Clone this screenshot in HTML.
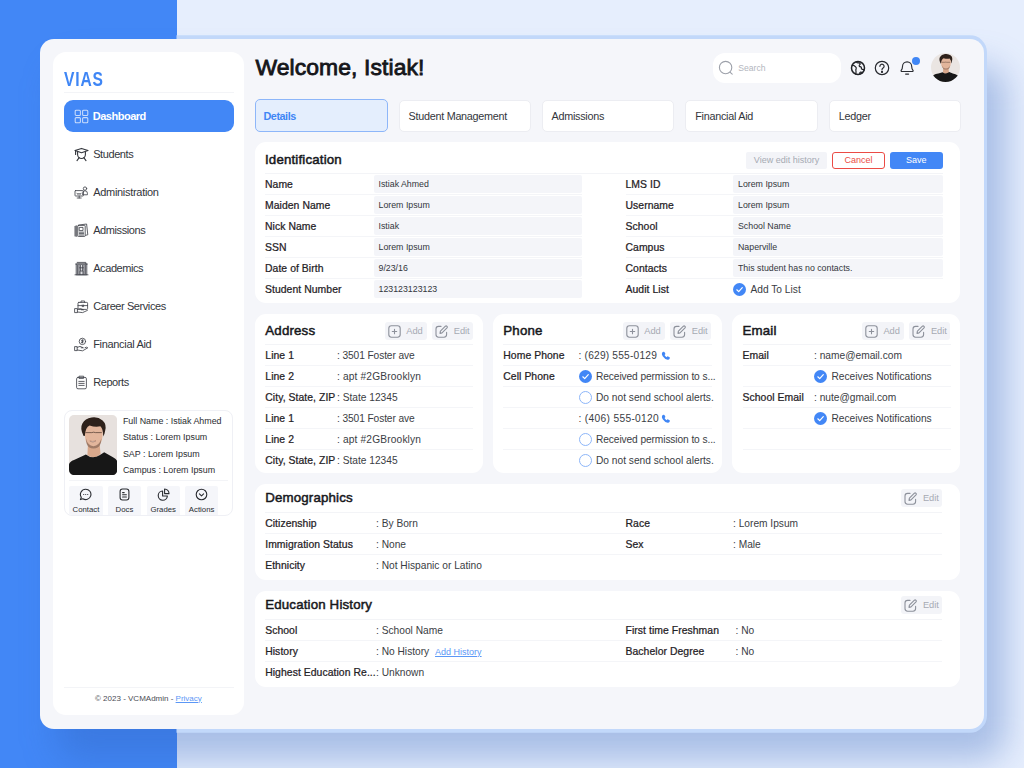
<!DOCTYPE html>
<html lang="en">
<head>
<meta charset="utf-8">
<title>VIAS Dashboard</title>
<style>
*{box-sizing:border-box;margin:0;padding:0}
html,body{width:1024px;height:768px;overflow:hidden}
body{position:relative;background:#E6EEFD;font-family:"Liberation Sans",Arial,sans-serif;color:#1d1f24;font-size:10.5px}
.abs{position:absolute}
#strip{left:0;top:0;width:176.5px;height:768px;background:#4287F6}
#shadow{left:56px;top:66px;width:950px;height:694px;border-radius:24px;background:rgba(47,98,188,.34);filter:blur(17px)}
#ring{left:36.5px;top:35.3px;width:950.5px;height:697.5px;border-radius:17.5px;background:#C2D8FA;clip-path:inset(0 0 0 140px)}
#card{left:40px;top:39px;width:943.5px;height:690px;border-radius:14px;background:#F5F6FA}
#side{left:52.5px;top:52px;width:191.5px;height:663px;border-radius:13px;background:#fff}
.logo{left:63.8px;top:69.6px;font-size:19.3px;font-weight:bold;color:#3F86F5;letter-spacing:1px;line-height:20px;transform:scaleX(.81);transform-origin:0 0}
.hr{height:1px;background:#F3F4F7}
.nav{left:64px;width:170px;height:32.5px;border-radius:9px;font-size:11px;color:#33363c;line-height:32.5px}
.nav svg{position:absolute;left:9.5px;top:9px;width:15px;height:15px;fill:none;stroke:#42454c;stroke-width:.85;stroke-linecap:round;stroke-linejoin:round}
.nav span{position:absolute;left:29.2px;top:0;white-space:nowrap;letter-spacing:-.42px}
.nav.on{background:#4287F6;color:#fff;font-weight:bold}
.nav.on span{letter-spacing:-.5px;left:28.8px}
.nav.on svg{stroke:#C9DCFC;stroke-width:1.05}
h1{left:255.4px;top:53.2px;font-size:22.9px;line-height:28px;font-weight:normal;letter-spacing:.1px;color:#15161a;white-space:nowrap;-webkit-text-stroke:.85px #15161a}
.tab{top:100px;width:132.3px;height:31.6px;border-radius:5px;background:#fff;border:1px solid #ECEDF2;font-size:10.8px;line-height:30px;padding-left:9px;color:#33363c;white-space:nowrap;letter-spacing:-.27px}
.tab.on{top:99.4px;width:133.2px;height:32.7px;line-height:32.2px;background:#E4EEFD;border-color:#8DB6F9;color:#3F86F5;font-weight:bold;padding-left:8px;letter-spacing:-.45px}
.panel{background:#fff;border-radius:11px}
.ttl{font-size:13.3px;font-weight:normal;color:#17181c;white-space:nowrap;letter-spacing:.16px;-webkit-text-stroke:.5px #17181c}
.lbl{font-weight:normal;font-size:10.4px;color:#1f2125;white-space:nowrap;letter-spacing:.06px;-webkit-text-stroke:.24px #1f2125}
.val{font-size:10.2px;color:#3a3d44;white-space:nowrap}
.row{position:absolute;height:21px;line-height:21px;border-bottom:1px solid #F4F5F8}
.inp{position:absolute;height:17.5px;background:#F4F5F9;border-radius:1px;font-size:8.8px;line-height:19.5px;color:#33363c;padding-left:5px;border-radius:2px;white-space:nowrap}
.btn{position:absolute;height:18px;border-radius:3px;background:#F3F4F8;color:#A6AAB3;font-size:9.3px;line-height:18px;white-space:nowrap}
.btn svg{position:absolute;top:2.5px;width:13px;height:13px;fill:none;stroke:#8d919b;stroke-width:1.1;stroke-linecap:round;stroke-linejoin:round}
.ck{position:absolute;width:13px;height:13px;border-radius:50%;background:#4287F6}
.ck svg{position:absolute;left:0;top:0;width:13px;height:13px;fill:none;stroke:#fff;stroke-width:1.2;stroke-linecap:round;stroke-linejoin:round}
.uc{position:absolute;width:13px;height:13px;border-radius:50%;background:#fff;border:1.1px solid #8DB6F9}
.pt{font-size:8.9px;line-height:11px;color:#2a2c31;white-space:nowrap}
.pi{width:13px;height:13px;fill:none;stroke:#2a2c31;stroke-width:1.1;stroke-linecap:round;stroke-linejoin:round}
.pb{top:505px;width:33.3px;text-align:center;font-size:7.8px;line-height:10px;color:#2a2c31;white-space:nowrap}
</style>
</head>
<body>
<div id="strip" class="abs"></div>
<div id="shadow" class="abs"></div>
<div id="ring" class="abs"></div>
<div id="card" class="abs"></div>
<div id="side" class="abs"></div>

<!-- SIDEBAR -->
<div class="abs logo">VIAS</div>
<div class="abs hr" style="left:64px;top:92px;width:170px"></div>
<div class="abs nav on" style="top:99.5px"><svg viewBox="0 0 15 15"><rect x="1.2" y="1.2" width="5.2" height="5.2" rx="1"/><rect x="8.6" y="1.2" width="5.2" height="5.2" rx="1"/><rect x="1.2" y="8.6" width="5.2" height="5.2" rx="1"/><rect x="8.6" y="8.6" width="5.2" height="5.2" rx="1"/></svg><span>Dashboard</span></div>
<div class="abs nav" style="top:137.5px"><svg viewBox="0 0 15 15" style="stroke-width:1.1;stroke:#33363c"><path d="M1 3.6 L7.5 1.4 L14 3.6 L7.5 5.8 Z"/><path d="M3.6 4.8 V7.6 a3.9 3.9 0 0 0 7.8 0 V4.8"/><path d="M5.2 10.6 L3 13.6 M9.8 10.6 L12 13.6"/><path d="M1.6 4 V7.4"/></svg><span>Students</span></div>
<div class="abs nav" style="top:175.5px"><svg viewBox="0 0 15 15"><rect x="1" y="5.6" width="8.4" height="5.4" rx=".6"/><path d="M3.2 13 H7.2 M5.2 11 V13"/><circle cx="11" cy="3.6" r="1.7"/><path d="M8.6 9.4 V8.2 a2.4 2.4 0 0 1 4.8 0 V9.4 Z"/><path d="M3 8.2 l1 1.4 l1-1.4 l1 1.4 l1-1.4"/></svg><span style="letter-spacing:-.3px">Administration</span></div>
<div class="abs nav" style="top:213.5px"><svg viewBox="0 0 15 15"><path d="M5 2 L12.6 1 L13.8 11.8 L6 13.4"/><rect x="3.8" y="2.4" width="7.4" height="11" rx=".6" fill="#fff"/><path d="M1 3.4 V13 M1.9 3 V13.2 M2.8 2.8 V13.4"/><rect x="5.6" y="4.4" width="3.4" height="3.2"/><path d="M5.4 9.2 H9.6 M5.4 10.6 H9.6 M5.4 12 H9.6"/></svg><span>Admissions</span></div>
<div class="abs nav" style="top:251.5px"><svg viewBox="0 0 15 15"><path d="M2.2 13.4 V3 H12.8 V13.4 Z" fill="#dcdde1"/><path d="M1 13.8 H14 M1.6 3 H13.4 M3.2 1.4 H11.8 V3"/><path d="M3.6 4.4 V12.8 M5 4.4 V12.8 M6.4 4.4 V9.6 M8.6 4.4 V9.6 M10 4.4 V12.8 M11.4 4.4 V12.8"/><path d="M6 13.6 V10 H9 V13.6 M5.6 6.8 H9.4"/></svg><span>Academics</span></div>
<div class="abs nav" style="top:289.5px"><svg viewBox="0 0 15 15"><rect x="4" y="3.4" width="9.6" height="7" rx=".8"/><path d="M7 3.4 V2 H10.6 V3.4"/><path d="M4 6.6 H13.6 M8.2 6 V7.6 H9.6 V6"/><path d="M1 9.6 H3.4 V13.6 H1 Z M3.4 10.4 L6.4 9.6 L9.6 10.8 H7.4 M3.4 13 L8.6 13.6 L13.4 11.4"/></svg><span>Career Services</span></div>
<div class="abs nav" style="top:327.5px"><svg viewBox="0 0 15 15"><circle cx="8.4" cy="4.4" r="3.2"/><path d="M8.4 2.8 V6 M7.4 5.4 H8.9 a.6 .6 0 0 0 0-1.1 H7.9 a.6 .6 0 0 1 0-1.1 H9.4"/><path d="M1 9.6 H3.2 V13.6 H1 Z M3.2 10.4 L6 9.4 L9.4 10.8 H7.2 M3.2 13 L8.6 13.8 L13.8 10.8 Q12.6 9.6 11 10.6"/></svg><span style="letter-spacing:-.32px">Financial Aid</span></div>
<div class="abs nav" style="top:365.5px"><svg viewBox="0 0 15 15"><rect x="2.6" y="2.4" width="9.8" height="11.4" rx="1.4"/><path d="M5.4 1.2 H9.6 V3.4 H5.4 Z"/><path d="M4.8 6.4 H10.2 M4.8 8.4 H10.2 M4.8 10.4 H10.2"/></svg><span>Reports</span></div>
<div class="abs" style="left:64px;top:409.8px;width:168.7px;height:106.4px;border:1px solid #EFF0F5;border-radius:8px;overflow:hidden">
<div class="abs" style="left:4.3px;top:75.2px;width:33.3px;height:32px;background:#F5F6FA;border-radius:2px"></div>
<div class="abs" style="left:42.8px;top:75.2px;width:33.3px;height:32px;background:#F5F6FA;border-radius:2px"></div>
<div class="abs" style="left:81.6px;top:75.2px;width:33.3px;height:32px;background:#F5F6FA;border-radius:2px"></div>
<div class="abs" style="left:120px;top:75.2px;width:33.3px;height:32px;background:#F5F6FA;border-radius:2px"></div>
</div>
<svg class="abs" style="left:69.2px;top:414.6px;width:48.2px;height:60.1px" viewBox="0 0 48.2 60.1"><defs><clipPath id="ph"><rect width="48.2" height="60.1" rx="5"/></clipPath></defs><g clip-path="url(#ph)"><rect width="48.2" height="60.1" fill="#E7E1DE"/><path d="M19 29 L18.4 40 Q24.5 45.4 31.6 39 L30.6 29 Z" fill="#d9a88b"/><path d="M0 60.1 V49.4 Q.6 46.6 5 45 L16.9 39.5 Q23.4 44.8 31 40 L35.2 37.2 L44 42.2 Q48.2 44.2 48.2 47 V60.1 Z" fill="#171717"/><path d="M15.6 17 Q15 8 24.6 8.6 Q34.2 8.4 33.8 18 Q33.6 26.5 30 30.6 Q27 33.8 24.4 33.6 Q21.6 33.6 18.8 30.2 Q15.8 26 15.6 17 Z" fill="#e3b69c"/><path d="M17 23.4 Q18.6 30.4 24.4 31.2 Q30.2 30.6 32.4 23.4 Q32.2 30 29 32.2 Q24.4 34.8 20 32.2 Q17 29.8 17 23.4 Z" fill="#6a4a3c" opacity=".55"/><path d="M14.6 21 Q10.6 13.6 13.4 8.6 Q16 3.4 22.6 2.5 Q29 1.5 33.6 5.4 Q37.8 9.2 36.2 15.6 Q35.6 19.8 34.2 21.6 Q34.4 14.4 31.4 11.2 Q26.4 12.4 20.6 10.4 Q16.4 12 15.8 21 Z" fill="#2e211b"/><path d="M16.4 17.6 H22.8 M26.4 17.6 H32.8 M22.8 17.6 Q24.6 16.8 26.4 17.6" stroke="#4a362c" stroke-width=".7" fill="none"/><path d="M20.8 26 Q23.8 28.8 27 25.8 Q23.8 27 20.8 26 Z" fill="#f4ece8" stroke="#8b5a49" stroke-width=".4"/></g></svg>
<div class="abs pt" style="left:122.9px;top:415.7px">Full Name : Istiak Ahmed</div>
<div class="abs pt" style="left:122.9px;top:432.4px">Status : Lorem Ipsum</div>
<div class="abs pt" style="left:122.9px;top:448.6px">SAP : Lorem Ipsum</div>
<div class="abs pt" style="left:122.9px;top:464.7px">Campus : Lorem Ipsum</div>
<div class="abs hr" style="left:69px;top:480.3px;width:159px"></div>
<svg class="abs pi" style="left:79.4px;top:487.5px" viewBox="0 0 13 13"><path d="M6.7 1.2 a5.2 5.2 0 1 1 -2.9 9.5 L1.4 11.6 L2.3 9.3 A5.2 5.2 0 0 1 6.7 1.2 Z"/><path d="M4.7 6.5 h.1 M6.7 6.5 h.1 M8.7 6.5 h.1" stroke-width="1"/></svg>
<svg class="abs pi" style="left:118px;top:487.5px" viewBox="0 0 13 13"><rect x="2.1" y="1" width="8.8" height="11" rx="2.4"/><path d="M4.6 9 H8.4 M4.6 6.8 H8.4 M4.6 4.6 H6.2"/></svg>
<svg class="abs pi" style="left:156.6px;top:487.5px" viewBox="0 0 13 13"><path d="M5.6 3 A4.6 4.6 0 1 0 10.4 8 H5.6 Z"/><path d="M7.6 1 A4.4 4.4 0 0 1 12 5.6 H7.6 Z"/></svg>
<svg class="abs pi" style="left:195.2px;top:487.5px" viewBox="0 0 13 13"><circle cx="6.5" cy="6.5" r="5.3"/><path d="M4.4 5.8 L6.5 7.8 L8.6 5.8"/></svg>
<div class="abs pb" style="left:69.3px">Contact</div>
<div class="abs pb" style="left:107.8px">Docs</div>
<div class="abs pb" style="left:146.6px">Grades</div>
<div class="abs pb" style="left:185px">Actions</div>
<div class="abs hr" style="left:64px;top:687px;width:170px"></div>
<div class="abs" style="left:95px;top:692.5px;font-size:8px;line-height:11px;color:#4a4d55;white-space:nowrap">© 2023 - VCMAdmin - <span style="color:#5B97F6;text-decoration:underline">Privacy</span></div>

<!-- HEADER -->
<h1 class="abs">Welcome, Istiak!</h1>
<div class="abs" style="left:712.5px;top:53px;width:128.5px;height:29.5px;border-radius:12px;background:#fff"></div>
<svg class="abs" style="left:718px;top:60px;width:16px;height:16px" viewBox="0 0 16 16" fill="none" stroke="#9DA1AA" stroke-width="1.1" stroke-linecap="round"><circle cx="7.6" cy="7.6" r="6.2"/><path d="M12.2 12.4 L14.2 14.2"/></svg>
<div class="abs" style="left:738.3px;top:63px;font-size:8.6px;line-height:11px;color:#B3B6BE;white-space:nowrap">Search</div>
<svg class="abs" style="left:850px;top:59.7px;width:16px;height:16px" viewBox="0 0 16 16" fill="none" stroke="#202226" stroke-width="1.5" stroke-linecap="round" stroke-linejoin="round"><circle cx="8" cy="8" r="6.5"/><path d="M2.4 5.6 Q4.4 5.2 5.2 6.6 Q6.6 7.4 6.2 8.8 Q5.4 9.8 6 11 Q6.2 12.8 5.6 14" stroke-width="1.2"/><path d="M6.4 2 Q7.4 3.4 9 2.8 Q10.6 3.2 10 4.6 Q8.6 5.6 9.6 6.6 Q11 6.4 11.4 7.6 Q11 9 12.2 9.4 Q13.4 9.2 14.2 9.8" stroke-width="1.2"/><path d="M9.8 14 Q9.4 12.6 10.6 12 Q11.8 12 12.4 12.8" stroke-width="1.2"/></svg>
<svg class="abs" style="left:874px;top:60px;width:16px;height:16px" viewBox="0 0 16 16" fill="none" stroke="#26282d" stroke-width="1.2" stroke-linecap="round" stroke-linejoin="round"><circle cx="8" cy="8" r="6.7"/><path d="M5.9 6.3 a2.1 2.1 0 1 1 3.2 1.8 Q8 8.8 8 9.8"/><circle cx="8" cy="11.9" r=".5" fill="#26282d"/></svg>
<svg class="abs" style="left:899.3px;top:60px;width:16px;height:16px" viewBox="0 0 16 16" fill="none" stroke="#2b2d32" stroke-width="1.15" stroke-linecap="round" stroke-linejoin="round"><path d="M3 11.5 Q1.7 11.5 2.2 10.3 Q3.5 8.8 3.5 6.4 a4.6 4.6 0 0 1 9.2 0 Q12.7 8.8 14 10.3 Q14.5 11.5 13.2 11.5 Z"/><path d="M6.6 14.1 H9.6"/></svg>
<div class="abs" style="left:911.9px;top:57px;width:8.2px;height:8.2px;border-radius:50%;background:#3F86F5"></div>
<svg class="abs" style="left:931.1px;top:53.3px;width:29px;height:29px" viewBox="0 0 29 29"><defs><clipPath id="av"><circle cx="14.5" cy="14.5" r="14.5"/></clipPath></defs><g clip-path="url(#av)"><rect width="29" height="29" fill="#EAE5E2"/><path d="M12.2 14 L12 19.6 Q14.8 22.4 17.9 19.4 L17.6 14 Z" fill="#d8a88c"/><path d="M0 29 V25 Q1.6 21.4 7.4 20.6 L11.6 19.3 Q14.8 21.8 18.2 19.1 L21.8 20.4 Q27.6 21.4 29 25 V29 Z" fill="#171717"/><path d="M10 9.4 Q9.8 4 15 4.2 Q20 4 19.9 9.6 Q19.8 13.4 18 15.2 Q16.4 16.4 14.9 16.3 Q13.4 16.3 11.8 15 Q10.1 13 10 9.4 Z" fill="#e2b59b"/><path d="M10.8 12 Q11.6 15.2 14.9 15.6 Q18.2 15.2 19.2 12 Q19 15 17.4 16 Q14.9 17.2 12.5 16 Q10.9 14.8 10.8 12 Z" fill="#6a4a3c" opacity=".5"/><path d="M9.6 10.4 Q7.6 6.6 9 4 Q10.4 1.4 14 1.1 Q17.6 .6 19.8 2.6 Q22 4.6 21 8 Q20.8 9.8 20.2 10.6 Q20.2 7.2 18.6 5.6 Q15.8 6.2 12.6 5.2 Q10.4 6 10 10.4 Z" fill="#2e211b"/><path d="M10.6 9.3 H13.8 M15.8 9.3 H19.2 M13.8 9.3 Q14.8 8.9 15.8 9.3" stroke="#4a362c" stroke-width=".45" fill="none"/></g></svg>
<div class="abs tab on" style="left:254.5px"><span>Details</span></div>
<div class="abs tab" style="left:398.6px"><span>Student Management</span></div>
<div class="abs tab" style="left:541.6px;width:132.8px"><span>Admissions</span></div>
<div class="abs tab" style="left:685.3px"><span>Financial Aid</span></div>
<div class="abs tab" style="left:828.8px"><span>Ledger</span></div>
<div class="abs panel" style="left:255px;top:142px;width:705px;height:160.5px"></div>
<div class="abs ttl" id="t-id" style="left:265px;top:152px;line-height:16px">Identification</div>
<div class="btn" style="left:746.3px;top:151.5px;width:80.7px;height:17px;line-height:17px;border-radius:2px;font-size:9px;padding-left:7.5px"><span class="bt">View edit history</span></div>
<div class="btn" style="left:832px;top:151.5px;width:53px;height:17px;line-height:15.4px;border-radius:3px;font-size:9px;background:#fff;border:1px solid #EB4B45;color:#EB4B45;text-align:center"><span class="bt">Cancel</span></div>
<div class="btn" style="left:890px;top:151.5px;width:52.5px;height:17px;line-height:17px;border-radius:3px;font-size:9px;background:#4287F6;color:#fff;text-align:center"><span class="bt">Save</span></div>
<div class="abs hr" style="left:265px;top:172.5px;width:677.5px"></div>
<div class="row" style="left:265px;top:173.5px;width:317px"><span class="lbl il">Name</span></div>
<div class="inp" style="left:373.5px;top:175.0px;width:208.5px"><span class="iv">Istiak Ahmed</span></div>
<div class="row" style="left:625.5px;top:173.5px;width:317px"><span class="lbl il">LMS ID</span></div>
<div class="inp" style="left:733px;top:175.0px;width:209.5px"><span class="iv">Lorem Ipsum</span></div>
<div class="row" style="left:265px;top:194.5px;width:317px"><span class="lbl il">Maiden Name</span></div>
<div class="inp" style="left:373.5px;top:196.0px;width:208.5px"><span class="iv">Lorem Ipsum</span></div>
<div class="row" style="left:625.5px;top:194.5px;width:317px"><span class="lbl il">Username</span></div>
<div class="inp" style="left:733px;top:196.0px;width:209.5px"><span class="iv">Lorem Ipsum</span></div>
<div class="row" style="left:265px;top:215.5px;width:317px"><span class="lbl il">Nick Name</span></div>
<div class="inp" style="left:373.5px;top:217.0px;width:208.5px"><span class="iv">Istiak</span></div>
<div class="row" style="left:625.5px;top:215.5px;width:317px"><span class="lbl il">School</span></div>
<div class="inp" style="left:733px;top:217.0px;width:209.5px"><span class="iv">School Name</span></div>
<div class="row" style="left:265px;top:236.5px;width:317px"><span class="lbl il">SSN</span></div>
<div class="inp" style="left:373.5px;top:238.0px;width:208.5px"><span class="iv">Lorem Ipsum</span></div>
<div class="row" style="left:625.5px;top:236.5px;width:317px"><span class="lbl il">Campus</span></div>
<div class="inp" style="left:733px;top:238.0px;width:209.5px"><span class="iv">Naperville</span></div>
<div class="row" style="left:265px;top:257.5px;width:317px"><span class="lbl il">Date of Birth</span></div>
<div class="inp" style="left:373.5px;top:259.0px;width:208.5px"><span class="iv">9/23/16</span></div>
<div class="row" style="left:625.5px;top:257.5px;width:317px"><span class="lbl il">Contacts</span></div>
<div class="inp" style="left:733px;top:259.0px;width:209.5px"><span class="iv">This student has no contacts.</span></div>
<div class="row" style="left:265px;top:278.5px;width:317px;border-bottom:0"><span class="lbl il">Student Number</span></div>
<div class="inp" style="left:373.5px;top:280.0px;width:208.5px"><span class="iv">123123123123</span></div>
<div class="row" style="left:625.5px;top:278.5px;width:317px;border-bottom:0"><span class="lbl il">Audit List</span></div>
<div class="ck" style="left:733px;top:282.7px"><svg viewBox="0 0 13 13"><path d="M3.8 6.8 L5.7 8.6 L9.3 4.6"/></svg></div>
<div class="abs val" id="addto" style="left:750.5px;top:278.5px;line-height:21px">Add To List</div>
<div class="abs panel" style="left:255px;top:313.7px;width:227.5px;height:159.5px"></div>
<div class="abs ttl" id="t-ad" style="left:265.3px;top:323px;line-height:16px">Address</div>
<div class="btn" style="left:384.5px;top:322px;width:42.5px"><span style="position:absolute;left:0"><svg style='left:3px' viewBox="0 0 13 13"><rect x=".8" y=".8" width="11.4" height="11.4" rx="2.6"/><path d="M6.5 4.3 V8.7 M4.3 6.5 H8.7"/></svg></span><span class="bt" style="position:absolute;left:21.7px">Add</span></div>
<div class="btn" style="left:432px;top:322px;width:41.3px"><span style="position:absolute;left:0"><svg style='left:3px' viewBox="0 0 13 13"><path d="M6 1.4 H3.6 Q1 1.4 1 4 V9.6 Q1 12.2 3.6 12.2 H9 Q11.6 12.2 11.6 9.6 V7.4"/><path d="M5 8.4 L5.4 6.2 L10.4 1.2 Q11.2 .6 12 1.4 Q12.6 2.2 12 2.9 L7 7.9 Z"/></svg></span><span class="bt" style="position:absolute;left:21.7px">Edit</span></div>
<div class="abs hr" style="left:265.3px;top:344px;width:208.0px"></div>
<div class="row" style="left:265.3px;top:345px;width:208.0px"><span class="lbl al">Line 1</span></div>
<div class="abs val av" style="left:337px;top:345px;line-height:21px;letter-spacing:-.1px">: 3501 Foster ave</div>
<div class="row" style="left:265.3px;top:366px;width:208.0px"><span class="lbl al">Line 2</span></div>
<div class="abs val av" style="left:337px;top:366px;line-height:21px;letter-spacing:.15px">: apt #2GBrooklyn</div>
<div class="row" style="left:265.3px;top:387px;width:208.0px"><span class="lbl al">City, State, ZIP</span></div>
<div class="abs val av" style="left:337px;top:387px;line-height:21px">: State 12345</div>
<div class="row" style="left:265.3px;top:408px;width:208.0px"><span class="lbl al">Line 1</span></div>
<div class="abs val av" style="left:337px;top:408px;line-height:21px;letter-spacing:-.1px">: 3501 Foster ave</div>
<div class="row" style="left:265.3px;top:429px;width:208.0px"><span class="lbl al">Line 2</span></div>
<div class="abs val av" style="left:337px;top:429px;line-height:21px;letter-spacing:.15px">: apt #2GBrooklyn</div>
<div class="row" style="left:265.3px;top:450px;width:208.0px;border-bottom:0"><span class="lbl al">City, State, ZIP</span></div>
<div class="abs val av" style="left:337px;top:450px;line-height:21px">: State 12345</div>
<div class="abs panel" style="left:493px;top:313.7px;width:228.5px;height:159.5px"></div>
<div class="abs ttl" id="t-ph" style="left:503.3px;top:323px;line-height:16px">Phone</div>
<div class="btn" style="left:622.5px;top:322px;width:42.5px"><span style="position:absolute;left:0"><svg style='left:3px' viewBox="0 0 13 13"><rect x=".8" y=".8" width="11.4" height="11.4" rx="2.6"/><path d="M6.5 4.3 V8.7 M4.3 6.5 H8.7"/></svg></span><span class="bt" style="position:absolute;left:21.7px">Add</span></div>
<div class="btn" style="left:670px;top:322px;width:41.3px"><span style="position:absolute;left:0"><svg style='left:3px' viewBox="0 0 13 13"><path d="M6 1.4 H3.6 Q1 1.4 1 4 V9.6 Q1 12.2 3.6 12.2 H9 Q11.6 12.2 11.6 9.6 V7.4"/><path d="M5 8.4 L5.4 6.2 L10.4 1.2 Q11.2 .6 12 1.4 Q12.6 2.2 12 2.9 L7 7.9 Z"/></svg></span><span class="bt" style="position:absolute;left:21.7px">Edit</span></div>
<div class="abs hr" style="left:503.3px;top:344px;width:209.0px"></div>
<div class="row" style="left:503.3px;top:345px;width:209.0px"><span class="lbl pl">Home Phone</span></div>
<div class="abs val pv" style="left:578.5px;top:345px;line-height:21px;letter-spacing:.2px">: (629) 555-0129</div>
<div class="abs phi" style="left:661px;top:350.7px;width:10px;height:10px"><svg viewBox="0 0 10 10" style="position:absolute;width:9.5px;height:9.5px"><path d="M2.6 .8 Q3.2 .5 3.6 1.1 L4.5 2.7 Q4.8 3.3 4.3 3.7 L3.7 4.2 Q4.5 5.8 6 6.5 L6.5 5.9 Q6.9 5.4 7.5 5.7 L9 6.6 Q9.6 7 9.3 7.6 Q8.6 9.3 7 9.2 Q3.9 8.7 1.8 5.6 Q.6 3.6 1 2.2 Q1.4 1.2 2.6 .8 Z" fill="#3F86F5"/></svg></div>
<div class="row" style="left:503.3px;top:366px;width:209.0px"><span class="lbl pl">Cell Phone</span></div>
<div class="ck" style="left:578.5px;top:370px"><svg viewBox="0 0 13 13"><path d="M3.8 6.8 L5.7 8.6 L9.3 4.6"/></svg></div>
<div class="abs val pv" style="left:596.0px;top:366px;line-height:21px;letter-spacing:-.1px">Received permission to s...</div>
<div class="row" style="left:503.3px;top:387px;width:209.0px"></div>
<div class="uc" style="left:578.5px;top:391px"></div>
<div class="abs val pv" style="left:596.0px;top:387px;line-height:21px">Do not send school alerts.</div>
<div class="row" style="left:503.3px;top:408px;width:209.0px"></div>
<div class="abs val pv" style="left:578.5px;top:408px;line-height:21px;letter-spacing:.33px">: (406) 555-0120</div>
<div class="abs phi" style="left:661px;top:413.7px;width:10px;height:10px"><svg viewBox="0 0 10 10" style="position:absolute;width:9.5px;height:9.5px"><path d="M2.6 .8 Q3.2 .5 3.6 1.1 L4.5 2.7 Q4.8 3.3 4.3 3.7 L3.7 4.2 Q4.5 5.8 6 6.5 L6.5 5.9 Q6.9 5.4 7.5 5.7 L9 6.6 Q9.6 7 9.3 7.6 Q8.6 9.3 7 9.2 Q3.9 8.7 1.8 5.6 Q.6 3.6 1 2.2 Q1.4 1.2 2.6 .8 Z" fill="#3F86F5"/></svg></div>
<div class="row" style="left:503.3px;top:429px;width:209.0px"></div>
<div class="uc" style="left:578.5px;top:433px"></div>
<div class="abs val pv" style="left:596.0px;top:429px;line-height:21px;letter-spacing:-.1px">Received permission to s...</div>
<div class="row" style="left:503.3px;top:450px;width:209.0px;border-bottom:0"></div>
<div class="uc" style="left:578.5px;top:454px"></div>
<div class="abs val pv" style="left:596.0px;top:450px;line-height:21px">Do not send school alerts.</div>
<div class="abs panel" style="left:732.2px;top:313.7px;width:228px;height:159.5px"></div>
<div class="abs ttl" id="t-em" style="left:742.5px;top:323px;line-height:16px">Email</div>
<div class="btn" style="left:861.7px;top:322px;width:42.5px"><span style="position:absolute;left:0"><svg style='left:3px' viewBox="0 0 13 13"><rect x=".8" y=".8" width="11.4" height="11.4" rx="2.6"/><path d="M6.5 4.3 V8.7 M4.3 6.5 H8.7"/></svg></span><span class="bt" style="position:absolute;left:21.7px">Add</span></div>
<div class="btn" style="left:909.2px;top:322px;width:41.3px"><span style="position:absolute;left:0"><svg style='left:3px' viewBox="0 0 13 13"><path d="M6 1.4 H3.6 Q1 1.4 1 4 V9.6 Q1 12.2 3.6 12.2 H9 Q11.6 12.2 11.6 9.6 V7.4"/><path d="M5 8.4 L5.4 6.2 L10.4 1.2 Q11.2 .6 12 1.4 Q12.6 2.2 12 2.9 L7 7.9 Z"/></svg></span><span class="bt" style="position:absolute;left:21.7px">Edit</span></div>
<div class="abs hr" style="left:742.5px;top:344px;width:208.5px"></div>
<div class="row" style="left:742.5px;top:345px;width:208.5px"><span class="lbl el">Email</span></div>
<div class="abs val ev" style="left:814px;top:345px;line-height:21px">: name@email.com</div>
<div class="row" style="left:742.5px;top:366px;width:208.5px"></div>
<div class="ck" style="left:814px;top:370px"><svg viewBox="0 0 13 13"><path d="M3.8 6.8 L5.7 8.6 L9.3 4.6"/></svg></div>
<div class="abs val ev" style="left:831.5px;top:366px;line-height:21px">Receives Notifications</div>
<div class="row" style="left:742.5px;top:387px;width:208.5px"><span class="lbl el">School Email</span></div>
<div class="abs val ev" style="left:814px;top:387px;line-height:21px">: nute@gmail.com</div>
<div class="row" style="left:742.5px;top:408px;width:208.5px"></div>
<div class="ck" style="left:814px;top:412px"><svg viewBox="0 0 13 13"><path d="M3.8 6.8 L5.7 8.6 L9.3 4.6"/></svg></div>
<div class="abs val ev" style="left:831.5px;top:408px;line-height:21px">Receives Notifications</div>
<div class="row" style="left:742.5px;top:429px;width:208.5px"></div>
<div class="row" style="left:742.5px;top:450px;width:208.5px;border-bottom:0"></div>
<div class="abs panel" style="left:255px;top:484.3px;width:705px;height:95.5px"></div>
<div class="abs ttl" id="t-de" style="left:265.2px;top:489.8px;line-height:16px">Demographics</div>
<div class="btn" style="left:901.2px;top:489.3px;width:41.3px"><span style="position:absolute;left:0"><svg style="left:3px" viewBox="0 0 13 13"><path d="M6 1.4 H3.6 Q1 1.4 1 4 V9.6 Q1 12.2 3.6 12.2 H9 Q11.6 12.2 11.6 9.6 V7.4"/><path d="M5 8.4 L5.4 6.2 L10.4 1.2 Q11.2 .6 12 1.4 Q12.6 2.2 12 2.9 L7 7.9 Z"/></svg></span><span class="bt" style="position:absolute;left:21.7px">Edit</span></div>
<div class="abs hr" style="left:265.2px;top:512.3px;width:677.3px"></div>
<div class="row" style="left:265.2px;top:513.3px;width:677.3px"><span class="lbl dl">Citizenship</span></div>
<div class="abs val dv" style="left:376px;top:513.3px;line-height:21px">: By Born</div>
<div class="abs lbl dl" style="left:625.5px;top:513.3px;line-height:21px">Race</div>
<div class="abs val dv" style="left:733px;top:513.3px;line-height:21px">: Lorem Ipsum</div>
<div class="row" style="left:265.2px;top:534.3px;width:677.3px"><span class="lbl dl">Immigration Status</span></div>
<div class="abs val dv" style="left:376px;top:534.3px;line-height:21px">: None</div>
<div class="abs lbl dl" style="left:625.5px;top:534.3px;line-height:21px">Sex</div>
<div class="abs val dv" style="left:733px;top:534.3px;line-height:21px">: Male</div>
<div class="row" style="left:265.2px;top:555.3px;width:677.3px;border-bottom:0"><span class="lbl dl">Ethnicity</span></div>
<div class="abs val dv" style="left:376px;top:555.3px;line-height:21px">: Not Hispanic or Latino</div>
<div class="abs panel" style="left:255px;top:590.5px;width:705px;height:96px"></div>
<div class="abs ttl" id="t-ed" style="left:265.2px;top:597px;line-height:16px">Education History</div>
<div class="btn" style="left:901.2px;top:596.2px;width:41.3px"><span style="position:absolute;left:0"><svg style="left:3px" viewBox="0 0 13 13"><path d="M6 1.4 H3.6 Q1 1.4 1 4 V9.6 Q1 12.2 3.6 12.2 H9 Q11.6 12.2 11.6 9.6 V7.4"/><path d="M5 8.4 L5.4 6.2 L10.4 1.2 Q11.2 .6 12 1.4 Q12.6 2.2 12 2.9 L7 7.9 Z"/></svg></span><span class="bt" style="position:absolute;left:21.7px">Edit</span></div>
<div class="abs hr" style="left:265.2px;top:618.5px;width:677.3px"></div>
<div class="row" style="left:265.2px;top:619.5px;width:677.3px"><span class="lbl ul">School</span></div>
<div class="abs val uv" style="left:376px;top:619.5px;line-height:21px">: School Name</div>
<div class="abs lbl ul" style="left:625.5px;top:619.5px;line-height:21px">First time Freshman</div>
<div class="abs val uv" style="left:735.5px;top:619.5px;line-height:21px">: No</div>
<div class="row" style="left:265.2px;top:640.5px;width:677.3px"><span class="lbl ul">History</span></div>
<div class="abs val uv" style="left:376px;top:640.5px;line-height:21px">: No History <span id="addh" style="font-size:9px;color:#5B97F6;text-decoration:underline;margin-left:3px">Add History</span></div>
<div class="abs lbl ul" style="left:625.5px;top:640.5px;line-height:21px">Bachelor Degree</div>
<div class="abs val uv" style="left:735.5px;top:640.5px;line-height:21px">: No</div>
<div class="row" style="left:265.2px;top:661.5px;width:677.3px;border-bottom:0"><span class="lbl ul">Highest Education Re...</span></div>
<div class="abs val uv" style="left:376px;top:661.5px;line-height:21px">: Unknown</div>
</body>
</html>
